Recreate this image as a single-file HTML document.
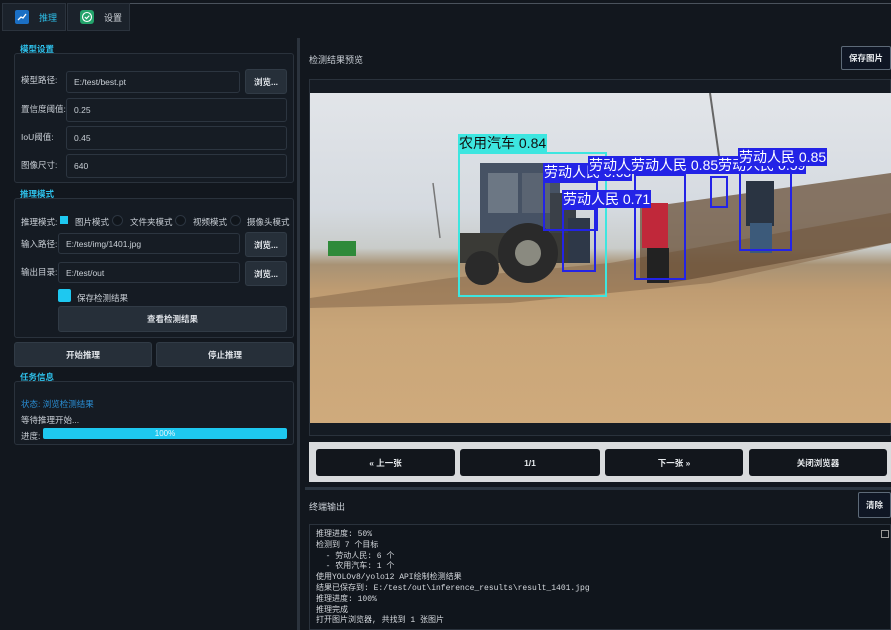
<!DOCTYPE html>
<html><head><meta charset="utf-8"><style>
*{margin:0;padding:0;box-sizing:border-box}
body{width:891px;height:630px;overflow:hidden;background:#12171e;font-family:"Liberation Sans","Noto Sans CJK SC",sans-serif;color:#d8dde3;font-size:9px;position:relative}
.a{position:absolute}
.tab{position:absolute;top:3px;height:28px;background:#1b222b;border:1px solid #2b333d;display:flex;align-items:center;gap:10px;padding-left:12px;font-size:9px}
.grp{position:absolute;border:1px solid #2a323c;border-radius:3px;background:#151b23}
.lbl{position:absolute;color:#c9cfd6;font-size:8.5px}
.inp{position:absolute;background:#161c24;border:1px solid #2c3540;border-radius:3px;color:#c9cfd6;font-size:8.5px;padding-left:7px;display:flex;align-items:center}
.btn{position:absolute;background:#262f39;border:1px solid #313b46;border-radius:3px;color:#e0e4e9;font-size:8.5px;font-weight:bold;display:flex;align-items:center;justify-content:center}
.sec{position:absolute;color:#2ec0ea;font-size:8.5px;font-weight:bold}
.rad{position:absolute;width:11px;height:11px;border-radius:50%;border:1px solid #2c3540;background:#10151b}
.box{position:absolute;border:2px solid #2323e6}
.tl{position:absolute;background:#2323e6;color:#fff;font-size:14px;line-height:18px;white-space:nowrap;padding:0 1px}
.nb{position:absolute;top:449px;height:27px;background:#12161c;border-radius:3px;color:#e6e9ec;font-size:8.5px;font-weight:bold;display:flex;align-items:center;justify-content:center}
</style></head><body>
<div class="a" style="left:130px;top:3px;width:761px;height:1px;background:#4a525c"></div>
<div class="tab" style="left:2px;width:64px;color:#2ec0ea"><span style="width:14px;height:14px;background:#1b6fc4;border-radius:2px;display:inline-block;position:relative"><svg width="14" height="14" style="position:absolute;left:0;top:0"><path d="M3 10 L6 7 L8 8 L11 4" stroke="#fff" stroke-width="1.3" fill="none"/></svg></span>推理</div>
<div class="tab" style="left:67px;width:63px;color:#cfd4da"><span style="width:14px;height:14px;background:#23a36b;border-radius:3px;display:inline-block;position:relative"><svg width="14" height="14" style="position:absolute;left:0;top:0"><circle cx="7" cy="7" r="4.5" stroke="#fff" stroke-width="1.1" fill="none"/><path d="M4.8 7 L6.5 8.6 L9.3 5.6" stroke="#fff" stroke-width="1.2" fill="none"/></svg></span>设置</div>

<div class="sec" style="left:20px;top:43px">模型设置</div>
<div class="grp" style="left:14px;top:53px;width:280px;height:130px"></div>
<div class="lbl" style="left:21px;top:74px">模型路径:</div>
<div class="inp" style="left:66px;top:71px;width:174px;height:22px">E:/test/best.pt</div>
<div class="btn" style="left:245px;top:69px;width:42px;height:25px">浏览...</div>
<div class="lbl" style="left:21px;top:103px">置信度阈值:</div>
<div class="inp" style="left:66px;top:98px;width:221px;height:24px">0.25</div>
<div class="lbl" style="left:21px;top:131px">IoU阈值:</div>
<div class="inp" style="left:66px;top:126px;width:221px;height:24px">0.45</div>
<div class="lbl" style="left:21px;top:159px">图像尺寸:</div>
<div class="inp" style="left:66px;top:154px;width:221px;height:24px">640</div>

<div class="sec" style="left:20px;top:188px">推理模式</div>
<div class="grp" style="left:14px;top:198px;width:280px;height:140px"></div>
<div class="lbl" style="left:21px;top:216px">推理模式:</div>
<div class="a" style="left:60px;top:216px;width:8px;height:8px;background:#1ec8f0"></div>
<div class="lbl" style="left:75px;top:216px">图片模式</div>
<div class="rad" style="left:112px;top:215px"></div>
<div class="lbl" style="left:130px;top:216px">文件夹模式</div>
<div class="rad" style="left:175px;top:215px"></div>
<div class="lbl" style="left:193px;top:216px">视频模式</div>
<div class="rad" style="left:230px;top:215px"></div>
<div class="lbl" style="left:247px;top:216px">摄像头模式</div>
<div class="lbl" style="left:21px;top:238px">输入路径:</div>
<div class="inp" style="left:58px;top:233px;width:182px;height:21px">E:/test/img/1401.jpg</div>
<div class="btn" style="left:245px;top:232px;width:42px;height:25px">浏览...</div>
<div class="lbl" style="left:21px;top:266px">输出目录:</div>
<div class="inp" style="left:58px;top:262px;width:182px;height:21px">E:/test/out</div>
<div class="btn" style="left:245px;top:261px;width:42px;height:25px">浏览...</div>
<div class="a" style="left:58px;top:289px;width:13px;height:13px;background:#1ec8f0;border-radius:2px"></div>
<div class="lbl" style="left:77px;top:292px">保存检测结果</div>
<div class="btn" style="left:58px;top:306px;width:229px;height:26px">查看检测结果</div>

<div class="btn" style="left:14px;top:342px;width:138px;height:25px">开始推理</div>
<div class="btn" style="left:156px;top:342px;width:138px;height:25px">停止推理</div>

<div class="sec" style="left:20px;top:371px">任务信息</div>
<div class="grp" style="left:14px;top:381px;width:280px;height:64px"></div>
<div class="lbl" style="left:21px;top:398px;color:#2a8fd6">状态: 浏览检测结果</div>
<div class="lbl" style="left:21px;top:414px">等待推理开始...</div>
<div class="lbl" style="left:21px;top:430px">进度:</div>
<div class="a" style="left:43px;top:428px;width:244px;height:11px;background:#1ec8f0;border-radius:2px;color:#eaf7fd;font-size:8px;text-align:center;line-height:11px">100%</div>

<div class="a" style="left:297px;top:38px;width:3px;height:592px;background:#2b333d"></div>

<div class="a" style="left:309px;top:53px;font-size:9px;color:#c9cfd6">检测结果预览</div>
<div class="a" style="left:841px;top:46px;width:50px;height:24px;border:1px solid #5d6a78;border-radius:2px;background:#0f1624;color:#e6e9ec;font-size:8.5px;font-weight:bold;display:flex;align-items:center;justify-content:center">保存图片</div>
<div class="a" style="left:309px;top:79px;width:582px;height:357px;border:1px solid #2a323c;background:#151b23"></div>
<div class="a" style="left:310px;top:93px;width:581px;height:330px;overflow:hidden;background:linear-gradient(180deg,#e2e5e9 0%,#d5dae0 35%,#c9ccca 47%,#a89274 52%,#bf9c72 60%,#c9a679 72%,#cfaa7c 100%)">
  <svg width="581" height="330" style="position:absolute;left:0;top:0">
    <polygon points="0,205 140,185 300,170 581,120 581,150 400,190 200,210 0,215" fill="#8a6d4e" opacity="0.6"/>
    <polygon points="330,115 581,80 581,150 360,190 330,185" fill="#6a5038" opacity="0.75"/>
    <rect x="170" y="70" width="80" height="80" fill="#465264"/>
    <rect x="178" y="80" width="30" height="40" fill="#6c7784"/>
    <rect x="212" y="80" width="28" height="40" fill="#5a6472"/>
    <rect x="150" y="140" width="120" height="30" fill="#3a3a36"/>
    <circle cx="218" cy="160" r="30" fill="#2a2a2a"/>
    <circle cx="218" cy="160" r="13" fill="#8a8a80"/>
    <circle cx="172" cy="175" r="17" fill="#2a2a2a"/>
    <rect x="18" y="148" width="28" height="15" fill="#2f8a3a"/>
    <rect x="-20" y="158" width="20" height="10" fill="#d0d3d6"/>
    <rect x="332" y="110" width="26" height="45" fill="#c0283a"/>
    <rect x="337" y="155" width="22" height="35" fill="#222"/>
    <rect x="436" y="88" width="28" height="45" fill="#2a3442"/>
    <rect x="440" y="130" width="22" height="30" fill="#3c5a7a"/>
    <rect x="240" y="100" width="26" height="40" fill="#3a4048"/>
    <rect x="258" y="125" width="22" height="45" fill="#2e3848"/>
    <line x1="400" y1="0" x2="410" y2="70" stroke="#666" stroke-width="2"/>
    <line x1="123" y1="90" x2="130" y2="145" stroke="#777" stroke-width="1.5"/>
  </svg>
  <div class="box" style="left:148px;top:59px;width:149px;height:145px;border-color:#3de6e0"></div>
  <div class="tl" style="left:148px;top:41px;background:#3de6e0;color:#111">农用汽车 0.84</div>
  <div class="box" style="left:233px;top:88px;width:55px;height:50px"></div>
  <div class="box" style="left:252px;top:115px;width:34px;height:64px"></div>
  <div class="box" style="left:324px;top:81px;width:52px;height:106px"></div>
  <div class="box" style="left:400px;top:83px;width:18px;height:32px"></div>
  <div class="box" style="left:429px;top:73px;width:53px;height:85px"></div>
  <div class="tl" style="left:233px;top:70px">劳动人民 0.63</div>
  <div class="tl" style="left:278px;top:63px">劳动人劳动人民 0.85劳动人民 0.59</div>
  <div class="tl" style="left:428px;top:55px">劳动人民 0.85</div>
  <div class="tl" style="left:252px;top:97px">劳动人民 0.71</div>
</div>

<div class="a" style="left:309px;top:442px;width:582px;height:40px;background:#d9dbdd"></div>
<div class="nb" style="left:316px;width:139px">« 上一张</div>
<div class="nb" style="left:460px;width:140px">1/1</div>
<div class="nb" style="left:605px;width:138px">下一张 »</div>
<div class="nb" style="left:749px;width:138px">关闭浏览器</div>
<div class="a" style="left:305px;top:487px;width:586px;height:3px;background:#2b3540"></div>

<div class="a" style="left:309px;top:500px;font-size:9px;color:#c9cfd6">终端输出</div>
<div class="a" style="left:858px;top:492px;width:33px;height:26px;border:1px solid #5d6a78;border-radius:2px;background:#0f1624;color:#e6e9ec;font-size:8.5px;font-weight:bold;display:flex;align-items:center;justify-content:center">清除</div>
<div class="a" style="left:309px;top:524px;width:582px;height:106px;border:1px solid #2a323c;background:#10151c"></div>
<div class="a" style="left:881px;top:530px;width:8px;height:8px;border:1px solid #999"></div>
<div class="a" style="left:316px;top:530px;font-family:'Liberation Mono','Noto Sans CJK SC',monospace;font-size:8px;line-height:10.8px;color:#d4d8dd;white-space:pre">推理进度: 50%
检测到 7 个目标
  - 劳动人民: 6 个
  - 农用汽车: 1 个
使用YOLOv8/yolo12 API绘制检测结果
结果已保存到: E:/test/out\inference_results\result_1401.jpg
推理进度: 100%
推理完成
打开图片浏览器, 共找到 1 张图片</div>
</body></html>
